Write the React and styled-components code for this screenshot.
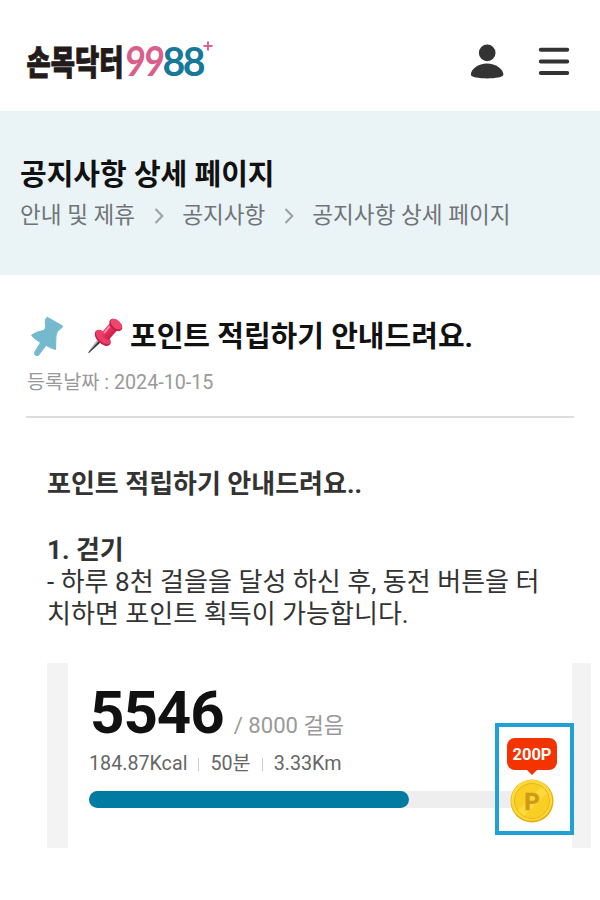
import styled, { createGlobalStyle } from "styled-components";

const crumbs = ["안내 및 제휴", "공지사항", "공지사항 상세 페이지"];
const stats = ["184.87Kcal", "50분", "3.33Km"];

export default function App() {
  return (
    <>
      <GlobalStyle />
      <Header>
        <Logo />
        <HeaderActions>
          <UserIcon />
          <MenuIcon />
        </HeaderActions>
      </Header>

      <Hero>
        <PageTitle>공지사항 상세 페이지</PageTitle>
        <Breadcrumb>
          {crumbs.map((crumb, index) => (
            <Crumb key={crumb}>
              {index > 0 && <ChevronIcon />}
              {crumb}
            </Crumb>
          ))}
        </Breadcrumb>
      </Hero>

      <Article>
        <ArticleHeader>
          <TitleRow>
            <FlatPin />
            <RedPin />
            <ArticleTitle>포인트 적립하기 안내드려요.</ArticleTitle>
          </TitleRow>
          <PostDate>등록날짜 : 2024-10-15</PostDate>
        </ArticleHeader>

        <Content>
          <Strong>포인트 적립하기 안내드려요..</Strong>
          <Section>
            <Strong>1. 걷기</Strong>
            <Text>
              - 하루 8천 걸을을 달성 하신 후, 동전 버튼을 터
              <br />
              치하면 포인트 획득이 가능합니다.
            </Text>
          </Section>
          <StepsCard steps={5546} goal={8000} />
        </Content>
      </Article>
    </>
  );
}

function StepsCard({ steps, goal }) {
  return (
    <Card>
      <StepsRow>
        <Steps>{steps}</Steps>
        <Goal>/ {goal} 걸음</Goal>
      </StepsRow>
      <Stats>
        {stats.map((stat) => (
          <Stat key={stat}>{stat}</Stat>
        ))}
      </Stats>
      <Track>
        <Progress />
      </Track>
      <RewardBox>
        <RewardBadge>200P</RewardBadge>
        <CoinIcon />
      </RewardBox>
    </Card>
  );
}

function Logo() {
  return (
    <svg width="200" height="80" viewBox="0 0 200 80">
      <g fontFamily="'Noto Sans CJK KR', sans-serif" fontWeight="900">
        <text
          transform="translate(0.5 52.500) scale(1.02 1.18)"
          fontSize="29"
          fill="#231a1a"
          stroke="#231a1a"
          strokeWidth="0.8"
          textLength="95"
          lengthAdjust="spacingAndGlyphs"
        >
          손목닥터
        </text>
      </g>
      <g fontFamily="Lato, sans-serif" fontWeight="700">
        <text
          transform="translate(98.500 54) skewX(-3) scale(0.86 1)"
          fontSize="41"
          letterSpacing="-1.600"
          fill="#d95f8c"
        >
          99
        </text>
        <text
          transform="translate(136.500 54) scale(0.96 1)"
          fontSize="41"
          letterSpacing="-2.600"
          fill="#16789a"
        >
          88
        </text>
      </g>
      <path d="M182 19.500v9M177.500 24h9" stroke="#d95f8c" strokeWidth="2" />
    </svg>
  );
}

function UserIcon() {
  return (
    <svg width="34" height="36" viewBox="0 0 34 36" fill="#333">
      <circle cx="17.200" cy="8.900" r="8.300" />
      <path d="M17 19.500C25.500 19.500 33.400 25 33.400 30.800C33.400 35.600 0.800 35.600 0.800 30.800C0.800 25 8.500 19.500 17 19.500Z" />
    </svg>
  );
}

function MenuIcon() {
  return (
    <svg width="32" height="30" viewBox="0 0 32 30">
      <path
        d="M2.800 2.700H29.200M2.800 14.400H29.200M2.800 26.100H29.200"
        stroke="#333"
        strokeWidth="4"
        strokeLinecap="round"
      />
    </svg>
  );
}

function ChevronIcon() {
  return (
    <Chevron width="10" height="16" viewBox="0 0 10 16">
      <path d="M1.500 1L8.300 8L1.500 15" fill="none" stroke="#9ba0a1" strokeWidth="2" />
    </Chevron>
  );
}

function FlatPin() {
  return (
    <svg width="34" height="40" viewBox="0 0 34 40">
      <path
        d="M17.300 1.300L32.300 9.800L32 11.500Q26 15 26 20L25.500 33.500Q20 32 16 29.300L9.500 38A2.500 2.500 0 0 1 4.700 36.200L10.500 26.600Q5 23.500 1.500 19.300Q5.500 15.800 14 14.300Q16.300 12 15.500 9.300Q14.500 5 16.300 2Z"
        fill="#75b9cf"
        stroke="#75b9cf"
        strokeLinejoin="round"
      />
    </svg>
  );
}

function RedPin() {
  return (
    <PinSvg width="36" height="36" viewBox="0 0 36 36">
      <defs>
        <linearGradient id="pinRed" x1="0" y1="0" x2="1" y2="1">
          <stop offset="0" stopColor="#f9638a" />
          <stop offset="0.45" stopColor="#e52d58" />
          <stop offset="1" stopColor="#a5143c" />
        </linearGradient>
      </defs>
      <path d="M11.500 20.500L14.500 23.500L2 35L1.200 34.500Z" fill="#35373b" />
      <path d="M11.500 20.500L12.800 21.800L1.600 34.200Z" fill="#bfc4cb" />
      <ellipse cx="15.700" cy="20" rx="9.800" ry="5.600" transform="rotate(44 15.700 20)" fill="#c41f4a" />
      <ellipse cx="16" cy="19" rx="9" ry="4.800" transform="rotate(44 16 19)" fill="#ec3d66" />
      <path d="M22.500 5.500L30.500 12L22 21.500Q20 22.500 17 19.500Q14 17 14.500 14.800Z" fill="url(#pinRed)" />
      <ellipse cx="28.800" cy="7" rx="7.500" ry="4.800" transform="rotate(42 28.800 7)" fill="#bd1d45" />
      <ellipse cx="29.300" cy="6.200" rx="6.700" ry="4" transform="rotate(42 29.300 6.200)" fill="#ed476d" />
      <path d="M17.500 14.500L22 9" stroke="#ff9ab3" strokeWidth="1.700" strokeLinecap="round" />
    </PinSvg>
  );
}

function CoinIcon() {
  return (
    <svg width="44" height="44" viewBox="0 0 44 44">
      <circle cx="22" cy="22" r="21.500" fill="#e6ae10" />
      <circle cx="21.700" cy="21.300" r="20.500" fill="#ffd93b" />
      <circle cx="22" cy="22" r="17.500" fill="#f9cf25" stroke="#eab51a" strokeWidth="1" />
      <path d="M8 31L31 8A17 17 0 0 1 37 14L14 37A17 17 0 0 1 8 31Z" fill="#ffe04a" opacity="0.6" />
      <g fontFamily="Roboto, sans-serif" fontSize="24" fontWeight="700" textAnchor="middle">
        <text x="22" y="30.500" fill="#d09a18" stroke="#d09a18" strokeWidth="0.5">
          P
        </text>
      </g>
    </svg>
  );
}

const GlobalStyle = createGlobalStyle`
  * {
    box-sizing: border-box;
  }

  body {
    margin: 0;
    background-color: white;
    color: #333;
    font-family: Roboto, "Noto Sans CJK KR", sans-serif;
  }

  h1, h2, p {
    margin: 0;
  }

  svg {
    display: block;
    flex-shrink: 0;
  }
`;

const Header = styled.header`
  display: flex;
  justify-content: space-between;
  align-items: center;
  height: 111px;
  padding: 12px 30px 0 26px;
`;

const HeaderActions = styled.div`
  display: flex;
  align-items: center;
  gap: 34px;
`;

const Hero = styled.section`
  height: 164px;
  padding: 43px 20px 0;
  background-color: #eaf3f6;
`;

const PageTitle = styled.h1`
  color: #111;
  font-size: 29px;
  font-weight: 700;
  line-height: 42px;
`;

const Breadcrumb = styled.nav`
  display: flex;
  padding-top: 1px;
  color: #707476;
  font-size: 22.6px;
  line-height: 38px;
`;

const Crumb = styled.span`
  display: flex;
  align-items: center;
`;

const Chevron = styled.svg`
  margin: 0 18px 0 19px;
`;

const Article = styled.article`
  padding: 40px 26px 0;
`;

const ArticleHeader = styled.header`
  height: 103px;
  border-bottom: 2px solid #dcdcdc;
`;

const TitleRow = styled.div`
  display: flex;
  align-items: center;
  height: 42px;
  padding-left: 4px;
`;

const PinSvg = styled.svg`
  margin: 0 7px 0 23px;
`;

const ArticleTitle = styled.h2`
  padding-top: 2px;
  color: #111;
  font-size: 29px;
  font-weight: 700;
  line-height: 42px;
  white-space: nowrap;
`;

const PostDate = styled.p`
  padding: 9px 0 0 1px;
  color: #999;
  font-size: 19.7px;
  line-height: 34px;
`;

const Content = styled.div`
  padding: 50px 0 0 21px;
  font-size: 26px;
  line-height: 32px;
`;

const Strong = styled.p`
  font-weight: 700;
`;

const Section = styled.section`
  margin: 34px 0 33px;
`;

const Text = styled.p`
  font-size: 26.05px;
  white-space: nowrap;
`;

const Card = styled.section`
  position: relative;
  width: 544px;
  height: 185px;
  padding: 19px 0 0 21px;
  border: solid #f3f3f3;
  border-width: 0 19px 0 21px;
`;

const StepsRow = styled.div`
  display: flex;
  align-items: baseline;
  gap: 10px;
  height: 63px;
  line-height: 62px;
`;

const Steps = styled.strong`
  padding-left: 1px;
  color: #111;
  font-size: 60px;
  font-weight: 700;
  letter-spacing: -1px;
`;

const Goal = styled.span`
  color: #999;
  font-size: 22.1px;
`;

const Stats = styled.div`
  display: flex;
  height: 38px;
  color: #666;
  font-size: 19.7px;
  line-height: 38px;
`;

const Stat = styled.span`
  display: flex;
  align-items: center;

  & + &::before {
    content: "";
    width: 1px;
    height: 13px;
    margin: 0 11px;
    background-color: #ccc;
  }
`;

const Track = styled.div`
  width: 440px;
  height: 17px;
  margin-top: 8px;
  border-radius: 9px;
  background-color: #eee;
`;

const Progress = styled.div`
  width: 320px;
  height: 100%;
  border-radius: 9px;
  background-color: #027ba3;
`;

const RewardBox = styled.div`
  position: absolute;
  top: 60px;
  right: -2px;
  display: flex;
  flex-direction: column;
  align-items: center;
  width: 79px;
  height: 112px;
  padding: 11px 5px 0 0;
  border: 4px solid #20a0d6;
`;

const RewardBadge = styled.span`
  position: relative;
  width: 50px;
  height: 32px;
  margin-bottom: 9px;
  border-radius: 8px;
  background-color: #f43400;
  color: white;
  font-size: 16.5px;
  font-weight: 700;
  line-height: 34px;
  text-align: center;

  &::after {
    content: "";
    position: absolute;
    top: 31px;
    left: 19px;
    border: solid transparent;
    border-width: 6px 6px 0;
    border-top-color: #f43400;
  }
`;
